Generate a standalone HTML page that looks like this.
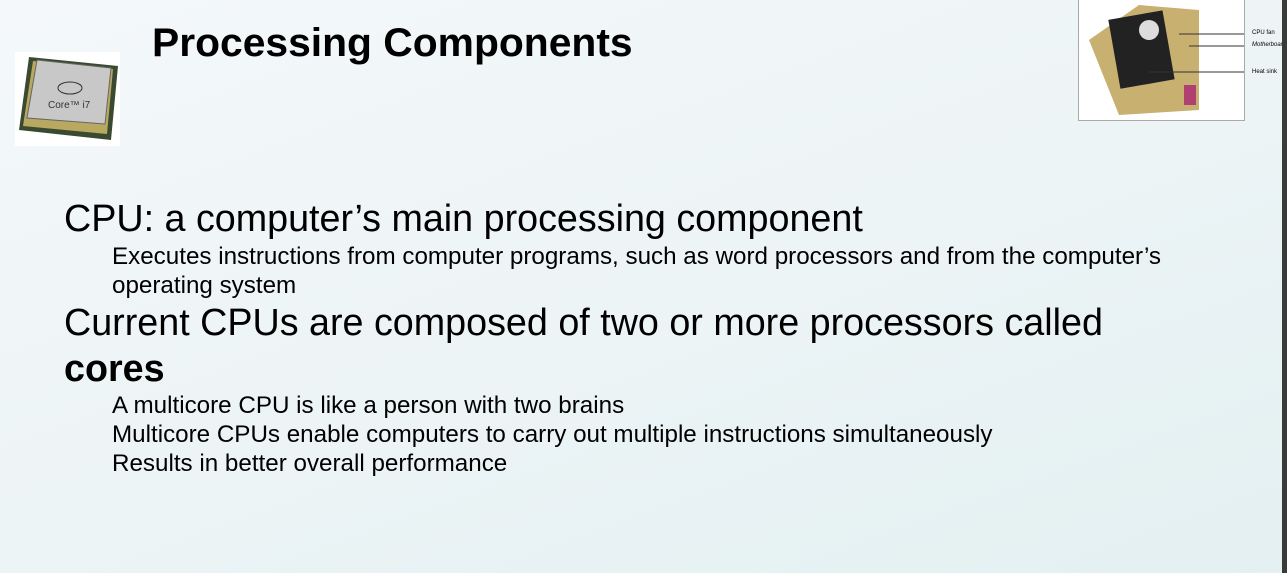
<!DOCTYPE html><html><head><style>
body{margin:0;width:1287px;height:573px;overflow:hidden;background:linear-gradient(160deg,#f4f8fa 0%,#edf4f6 50%,#e3f0f1 100%);font-family:"Liberation Sans",sans-serif;position:relative}
.t{position:absolute;white-space:nowrap;color:#000}
.l1{font-size:37.7px}.l2{font-size:24.2px}
</style></head><body>
<div class="t" style="left:152px;top:21px;font-size:40px;font-weight:bold;transform:scaleX(1.02);transform-origin:left">Processing Components</div>
<div style="position:absolute;left:15px;top:52px;width:105px;height:94px;background:#fff">
<svg width="105" height="94"><polygon points="14,5 103,14 96,88 4,78" fill="#3a4a30"/><polygon points="18,9 98,17 92,82 8,74" fill="#b8a860"/><polygon points="22,8 96,16 90,72 12,66" fill="#c8c8c8" stroke="#666"/><ellipse cx="55" cy="36" rx="12" ry="6" fill="none" stroke="#333"/><text x="33" y="56" font-size="10" fill="#333" font-family="Liberation Sans">Core™ i7</text></svg></div>
<div style="position:absolute;left:1078px;top:0;width:165px;height:120px;background:#fff;border:1px solid #aaa;border-top:none">
<svg width="165" height="120"><polygon points="10,40 60,5 120,10 120,110 40,115" fill="#c8b070"/><rect x="35" y="15" width="55" height="70" fill="#222" transform="rotate(-10 60 50)"/><circle cx="70" cy="30" r="10" fill="#ddd"/><rect x="105" y="85" width="12" height="20" fill="#b04070"/>
<line x1="100" y1="34" x2="172" y2="34" stroke="#333"/><line x1="110" y1="46" x2="172" y2="46" stroke="#333"/><line x1="70" y1="72" x2="172" y2="72" stroke="#333"/></svg></div>
<div class="t" style="left:1252px;top:30px;font-size:6px">CPU fan</div>
<div class="t" style="left:1252px;top:42px;font-size:6px;font-style:italic">Motherboard</div>
<div class="t" style="left:1252px;top:69px;font-size:6px">Heat sink</div>
<div style="position:absolute;left:1282px;top:0;width:5px;height:573px;background:#3a3a3a"></div>
<div class="t l1" style="left:64px;top:197px">CPU: a computer’s main processing component</div>
<div class="t l2" style="left:112px;top:243px">Executes instructions from computer programs, such as word processors and from the computer’s</div>
<div class="t l2" style="left:112px;top:272px">operating system</div>
<div class="t l1" style="left:64px;top:301px">Current CPUs are composed of two or more processors called</div>
<div class="t l1" style="left:64px;top:347px;font-weight:bold">cores</div>
<div class="t l2" style="left:112px;top:392px">A multicore CPU is like a person with two brains</div>
<div class="t l2" style="left:112px;top:421px">Multicore CPUs enable computers to carry out multiple instructions simultaneously</div>
<div class="t l2" style="left:112px;top:450px">Results in better overall performance</div>
</body></html>
